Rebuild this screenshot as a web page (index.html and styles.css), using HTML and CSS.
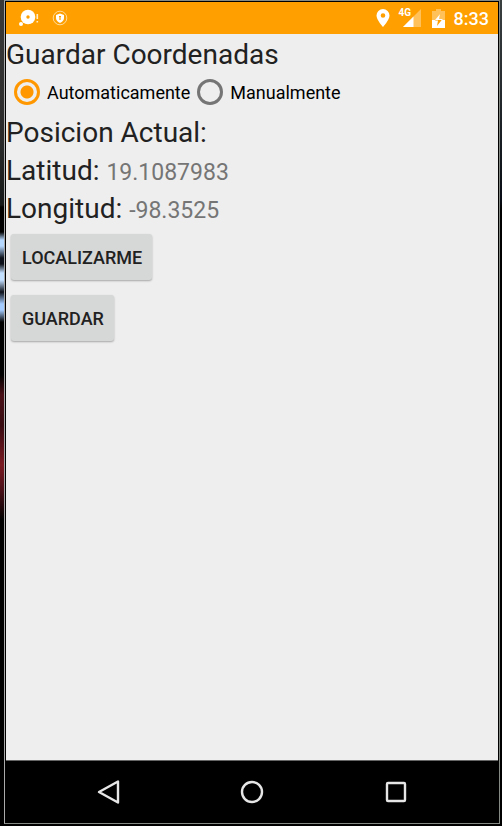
FILE: index.html
```html
<!DOCTYPE html>
<html lang="es">
<head>
<meta charset="utf-8">
<meta name="viewport" content="width=device-width, initial-scale=1">
<title>Guardar Coordenadas</title>
<link rel="stylesheet" href="styles.css">
</head>
<body>
<div class="device">
  <header class="status">
    <svg class="icon-debug" width="20" height="18" viewBox="0 0 20 18" aria-hidden="true">
      <circle cx="9" cy="8" r="7.3" fill="#fff"/>
      <circle cx="9" cy="8" r="1.7" fill="#ffa000"/>
      <circle cx="2" cy="15" r="2" fill="#fff"/>
      <path d="M18.3 5v5M18.3 12v1.5" stroke="#fff" stroke-opacity=".8" stroke-width="1.6"/>
    </svg>
    <svg class="icon-shield" width="16" height="16" viewBox="0 0 16 16" aria-hidden="true">
      <circle cx="8" cy="8" r="6.8" fill="none" stroke="#fff" stroke-opacity=".6"/>
      <path d="M8 3.5L12 5v3q0 3-4 5Q4 11 4 8V5z" fill="#fff"/>
      <path d="M8 6v4M7 6.5h2" stroke="#ffa000" stroke-width="1.2"/>
    </svg>
    <span class="spacer"></span>
    <svg class="icon-pin" width="14" height="20" viewBox="0 0 14 20" aria-hidden="true">
      <path d="M7 1a6.500 6.500 0 0 0-6.500 6.500c0 4.500 6.500 11.500 6.500 11.500s6.500-7 6.500-11.500A6.500 6.500 0 0 0 7 1zm0 4.200a2.300 2.300 0 1 1 0 4.600 2.300 2.300 0 0 1 0-4.600z" fill="#fff" fill-rule="evenodd"/>
    </svg>
    <span class="signal">
      <span class="network">4G</span>
      <svg width="18" height="18" viewBox="0 0 18 18" aria-hidden="true">
        <path d="M18 0v18H0z" fill="#fff" fill-opacity=".35"/>
        <path d="M10.5 7.5V18H0z" fill="#fff"/>
      </svg>
    </span>
    <svg class="icon-battery" width="13" height="19" viewBox="0 0 13 19" aria-hidden="true">
      <path d="M4 0h5v2h4v17H0V2h4z" fill="#fff" fill-opacity=".35"/>
      <path d="M0 11h13v8H0z" fill="#fff"/>
      <path d="M8 5L3 11.500h3L5 17l5.500-7H7.200z" fill="#ffa000"/>
      <path d="M8 5L3 11h7.500v-1H7.200z" fill="#fff"/>
    </svg>
    <time class="clock">8:33</time>
  </header>

  <main class="content">
    <h1 class="title">Guardar Coordenadas</h1>
    <form class="form">
      <div class="modes" role="radiogroup" aria-label="Modo">
        <label class="mode"><input type="radio" name="modo" checked>Automaticamente</label>
        <label class="mode"><input type="radio" name="modo">Manualmente</label>
      </div>
      <h2 class="title">Posicion Actual:</h2>
      <p class="title">Latitud: <output class="value">19.1087983</output></p>
      <p class="title">Longitud: <output class="value">-98.3525</output></p>
      <div class="actions">
        <button type="button">LOCALIZARME</button>
        <button type="button">GUARDAR</button>
      </div>
    </form>
  </main>

  <nav class="navbar">
    <button type="button" aria-label="Atrás">
      <svg width="24" height="26" viewBox="0 0 24 26" aria-hidden="true"><path d="M22 2.500v21L3 13z" fill="none" stroke="#e6e6e6" stroke-width="2.400" stroke-linejoin="round"/></svg>
    </button>
    <button type="button" aria-label="Inicio">
      <svg width="24" height="26" viewBox="0 0 24 26" aria-hidden="true"><circle cx="12" cy="13" r="10" fill="none" stroke="#e6e6e6" stroke-width="2.400"/></svg>
    </button>
    <button type="button" aria-label="Recientes">
      <svg width="24" height="26" viewBox="0 0 24 26" aria-hidden="true"><rect x="3" y="4" width="18" height="18" rx="1" fill="none" stroke="#e6e6e6" stroke-width="2.400"/></svg>
    </button>
  </nav>
</div>
</body>
</html>
```
FILE: styles.css
```css
* {
  box-sizing: border-box;
}

body {
  margin: 0;
  min-height: 100vh;
  display: flex;
  padding: 0 2px 2px 4px;
  font-family: Roboto, sans-serif;
  color: #212121;
  background:
    linear-gradient(#3a3a3a, #2a2a2a 140px, #151818 205px, #000 207px, #000 232px,
      #b5d8ff 240px, #b5d8ff 246px, #0c1018 258px, #0c1018 264px, #c4e0ff 273px,
      #c4e0ff 280px, #0c1018 292px, #a5ccff 304px, #a5ccff 310px, #000 322px,
      #000 375px, #4a1018 395px, #380c12 425px, #7a1a22 465px, #4a1018 490px,
      #000 520px) left top / 4px 100% no-repeat,
    linear-gradient(#3a3f40, #22282c 100px, #080c14 200px, #000 210px) right top / 2px 100% no-repeat,
    #000;
}

.device {
  flex: 1;
  display: flex;
  flex-direction: column;
  border: 1px solid #858a85;
  border-left-color: #aaa;
  padding: 1px 1px 0;
  background: #000;
}

.status {
  display: flex;
  align-items: center;
  height: 32px;
  padding: 0 9px 0 13px;
  background: #ffa000;
  color: #fff;
}

.icon-shield {
  margin-left: 13px;
}

.spacer {
  flex: 1;
}

.signal {
  position: relative;
  display: flex;
  margin-left: 13px;
}

.network {
  position: absolute;
  top: -1px;
  left: -4px;
  font-size: 10px;
  line-height: 10px;
  font-weight: 700;
}

.icon-battery {
  margin-left: 11px;
}

.clock {
  margin-left: 9px;
  font-size: 18px;
  font-weight: 500;
}

.content {
  flex: 1;
  padding-top: 2px;
  background: #eee;
}

.title {
  margin: 0;
  font-size: 28px;
  line-height: 38px;
  font-weight: 400;
}

.value {
  font-size: 23px;
  line-height: 24px;
  color: #757575;
}

.modes {
  display: flex;
  height: 40px;
  align-items: flex-start;
  gap: 7px;
  padding: 5px 0 0 8px;
}

.mode {
  display: flex;
  align-items: center;
  gap: 7px;
  font-size: 18px;
  color: #000;
}

.mode input {
  appearance: none;
  width: 26px;
  height: 26px;
  margin: 0;
  border: 3px solid #757575;
  border-radius: 50%;
}

.mode input:checked {
  border-color: #ff9800;
  background: radial-gradient(circle, #ff9800 6px, transparent 7px);
}

.actions {
  display: flex;
  flex-direction: column;
  align-items: flex-start;
  gap: 15px;
  padding: 6px 5px;
}

.actions button {
  height: 46px;
  padding: 0 10px 0 11px;
  border: 0;
  border-radius: 3px;
  background: #d6d7d7;
  box-shadow: 0 1px 2px rgba(0, 0, 0, 0.3);
  color: #212121;
  font: 500 18px Roboto, sans-serif;
}

.navbar {
  display: flex;
  justify-content: center;
  gap: 96px;
  height: 63px;
  border-top: 1px solid #666;
}

.navbar button {
  display: flex;
  align-items: center;
  justify-content: center;
  width: 48px;
  padding: 0;
  border: 0;
  background: none;
}
```
